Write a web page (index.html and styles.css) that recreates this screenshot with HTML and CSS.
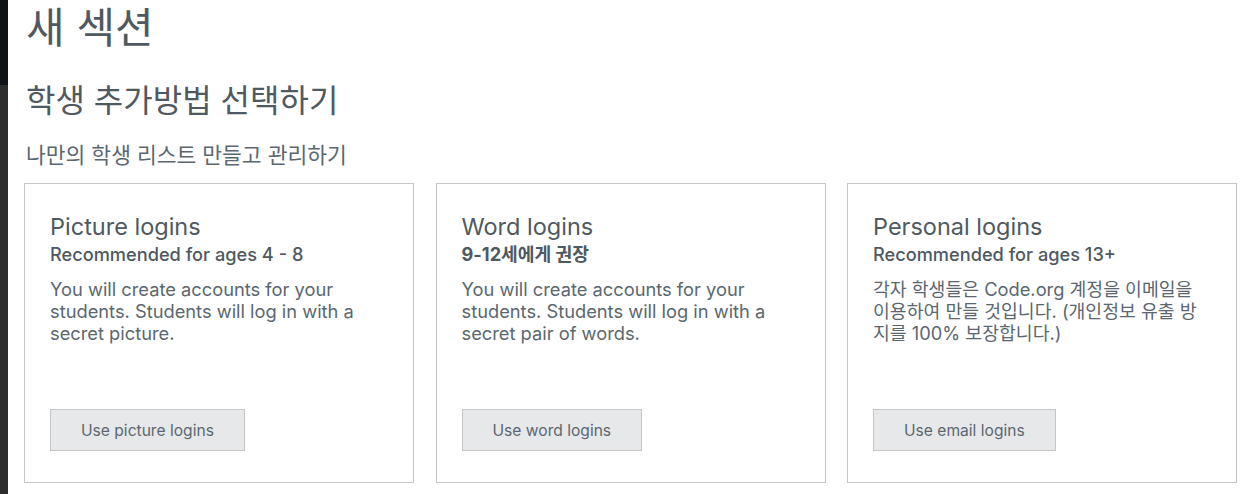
FILE: index.html
```html
<!DOCTYPE html>
<html lang="ko">
<head>
	<meta charset="utf-8"/>
	<title>새 섹션</title>
	<link rel="stylesheet" href="styles.css">
</head>

<body>
	<div class="rail">
		<div class="rail-top"></div>
		<div class="rail-bottom"></div>
	</div>

	<div class="main">
		<h1>새 섹션</h1>
		<h2>학생 추가방법 선택하기</h2>
		<p class="lead">나만의 학생 리스트 만들고 관리하기</p>

		<div class="cards">
			<div class="card">
				<h3>Picture logins</h3>
				<div class="ages">Recommended for ages 4 - 8</div>
				<p>You will create accounts for your students. Students will log in with a secret picture.</p>
				<button type="button" class="btn">Use picture logins</button>
			</div>
			<div class="card">
				<h3>Word logins</h3>
				<div class="ages ko">9-12세에게 권장</div>
				<p>You will create accounts for your students. Students will log in with a secret pair of words.</p>
				<button type="button" class="btn">Use word logins</button>
			</div>
			<div class="card">
				<h3>Personal logins</h3>
				<div class="ages">Recommended for ages 13+</div>
				<p>각자 학생들은 Code.org 계정을 이메일을 이용하여 만들 것입니다. (개인정보 유출 방지를 100% 보장합니다.)</p>
				<button type="button" class="btn">Use email logins</button>
			</div>
		</div>
	</div>
</body>
</html>
```

FILE: styles.css
```css
* {
	box-sizing: border-box;
}
body {
	margin: 0;
	display: flex;
	min-height: 100vh;
	background: #fff;
	font-family: Inter, "Noto Sans CJK KR", sans-serif;
	color: #5b6770;
}
.rail {
	flex: none;
	width: 8px;
	display: flex;
	flex-direction: column;
}
.rail-top {height: 85px; background: #0f1317;}
.rail-bottom {flex: 1; background: #2d2d2d;}

.main {
	flex: 1;
	min-width: 0;
	padding: 0 0 0 16px;
}
h1 {
	margin: 0;
	padding-left: 2px;
	font-family: "Noto Sans CJK KR", sans-serif;
	font-weight: 400;
	font-size: 42px;
	line-height: 50px;
	color: #4e5961;
}
h2 {
	margin: 30px 0 0;
	padding-left: 2px;
	font-family: "Noto Sans CJK KR", sans-serif;
	font-weight: 400;
	font-size: 32px;
	line-height: 36px;
	color: #4e5961;
}
.lead {
	margin: 25px 0 0;
	padding-left: 2px;
	font-family: "Noto Sans CJK KR", sans-serif;
	font-size: 21.5px;
	line-height: 26px;
	color: #5b6770;
}

.cards {
	display: grid;
	grid-template-columns: repeat(3, 390px);
	gap: 21.5px;
	margin-top: 16px;
}
.card {
	height: 300px;
	border: 1px solid #c6c6c6;
	padding: 28px 25px 31px;
	display: flex;
	flex-direction: column;
	align-items: flex-start;
}
h3 {
	margin: 0;
	font-weight: 400;
	font-size: 23.5px;
	line-height: 30px;
	color: #4e5961;
}
.ages {
	font-size: 18.2px;
	font-weight: 500;
	line-height: 24px;
	color: #4e5961;
}
.ages.ko {font-weight: 700;}
.card p {
	margin: 12px 0 0;
	font-size: 18.3px;
	line-height: 22px;
	color: #5b6770;
}
.btn {
	margin-top: auto;
	height: 42px;
	padding: 0 30px;
	background: #e7e8ea;
	border: 1px solid #c6c6c6;
	font-family: Inter, sans-serif;
	font-size: 15.6px;
	color: #5b6770;
}
```
